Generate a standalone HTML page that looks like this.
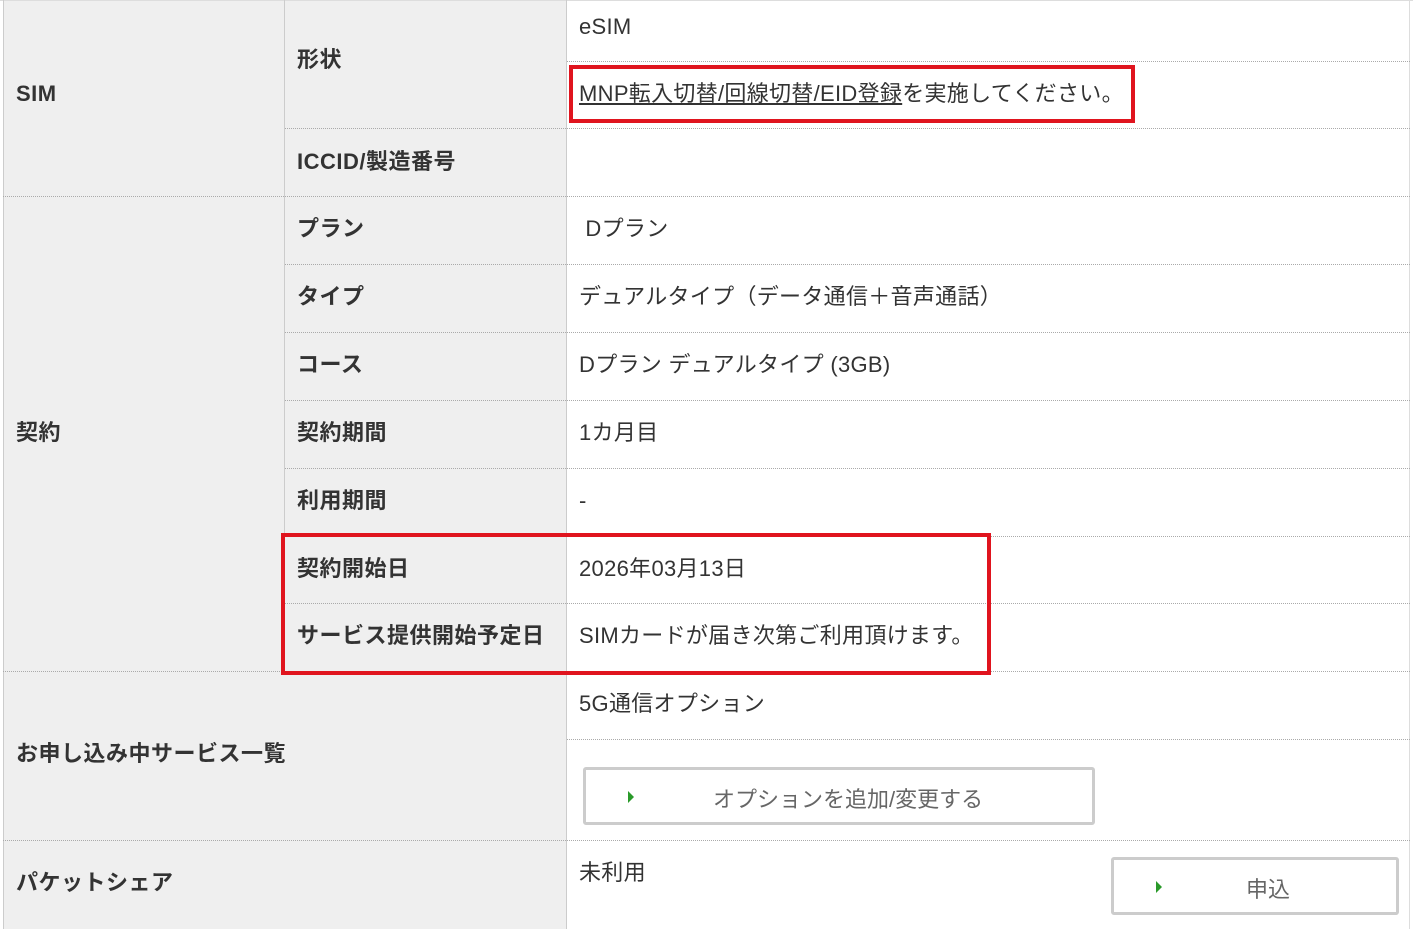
<!DOCTYPE html>
<html><head><meta charset="utf-8"><style>
body{margin:0;width:1413px;height:929px;position:relative;background:#fff;font-family:"Liberation Sans","Noto Sans CJK JP",sans-serif;color:#333;overflow:hidden}
.a{position:absolute}
.g{background:#efefef}
.h{border-top:1px dotted #aaa;height:0}
.v{width:1px;background:#ccc}
.t{font-size:22px;line-height:24px;white-space:nowrap;letter-spacing:0.3px}
.b{font-weight:bold;color:#333;letter-spacing:0.5px}
.red{border:4px solid #e0141e;box-sizing:border-box}
.btn{border:3px solid #ccc;border-radius:3px;background:#fff;box-sizing:border-box;color:#666;font-size:22px}
.tri{position:absolute;width:0;height:0;border-left:6px solid #2a9a2a;border-top:6px solid transparent;border-bottom:6px solid transparent}
</style></head><body>
<div class="a g" style="left:3px;top:0;width:563px;height:929px"></div>
<div class="a" style="left:0;top:0;width:1413px;height:1px;background:#ddd"></div>
<div class="a v" style="left:3px;top:0;height:929px"></div>
<div class="a v" style="left:284px;top:0;height:671px"></div>
<div class="a v" style="left:566px;top:0;height:929px"></div>
<div class="a v" style="left:1409px;top:0;height:929px;background:#ddd"></div>
<div class="a h" style="left:567px;top:61px;width:843px"></div>
<div class="a h" style="left:285px;top:128px;width:1125px"></div>
<div class="a h" style="left:3px;top:196px;width:1407px"></div>
<div class="a h" style="left:285px;top:264px;width:1125px"></div>
<div class="a h" style="left:285px;top:332px;width:1125px"></div>
<div class="a h" style="left:285px;top:400px;width:1125px"></div>
<div class="a h" style="left:285px;top:468px;width:1125px"></div>
<div class="a h" style="left:285px;top:536px;width:1125px"></div>
<div class="a h" style="left:285px;top:603px;width:1125px"></div>
<div class="a h" style="left:3px;top:671px;width:1407px"></div>
<div class="a h" style="left:567px;top:739px;width:843px"></div>
<div class="a h" style="left:3px;top:840px;width:1407px"></div>

<div class="a t b" style="left:16px;top:82px">SIM</div>
<div class="a t b" style="left:16px;top:421px">契約</div>
<div class="a t b" style="left:16px;top:742px">お申し込み中サービス一覧</div>
<div class="a t b" style="left:16px;top:871px">パケットシェア</div>

<div class="a t b" style="left:297px;top:48px">形状</div>
<div class="a t b" style="left:297px;top:150px">ICCID/製造番号</div>
<div class="a t b" style="left:297px;top:217px">プラン</div>
<div class="a t b" style="left:297px;top:285px">タイプ</div>
<div class="a t b" style="left:297px;top:353px">コース</div>
<div class="a t b" style="left:297px;top:421px">契約期間</div>
<div class="a t b" style="left:297px;top:489px">利用期間</div>
<div class="a t b" style="left:297px;top:557px">契約開始日</div>
<div class="a t b" style="left:297px;top:624px">サービス提供開始予定日</div>

<div class="a t" style="left:579px;top:15px">eSIM</div>
<div class="a t" style="left:579px;top:82px"><span style="text-decoration:underline">MNP転入切替/回線切替/EID登録</span>を実施してください。</div>
<div class="a t" style="left:579px;top:217px">&nbsp;Dプラン</div>
<div class="a t" style="left:579px;top:285px">デュアルタイプ（データ通信＋音声通話）</div>
<div class="a t" style="left:579px;top:353px">Dプラン デュアルタイプ (3GB)</div>
<div class="a t" style="left:579px;top:421px">1カ月目</div>
<div class="a t" style="left:579px;top:489px">-</div>
<div class="a t" style="left:579px;top:557px">2026年03月13日</div>
<div class="a t" style="left:579px;top:624px">SIMカードが届き次第ご利用頂けます。</div>
<div class="a t" style="left:579px;top:692px">5G通信オプション</div>
<div class="a t" style="left:579px;top:861px">未利用</div>

<div class="a btn" style="left:583px;top:767px;width:512px;height:58px"><div class="tri" style="left:42px;top:21px"></div><div class="a" style="left:127px;top:12px">オプションを追加/変更する</div></div>
<div class="a btn" style="left:1111px;top:857px;width:288px;height:58px"><div class="tri" style="left:42px;top:21px"></div><div class="a" style="left:132px;top:12px">申込</div></div>

<div class="a red" style="left:569px;top:65px;width:566px;height:58px"></div>
<div class="a red" style="left:281px;top:533px;width:710px;height:142px"></div>
</body></html>
